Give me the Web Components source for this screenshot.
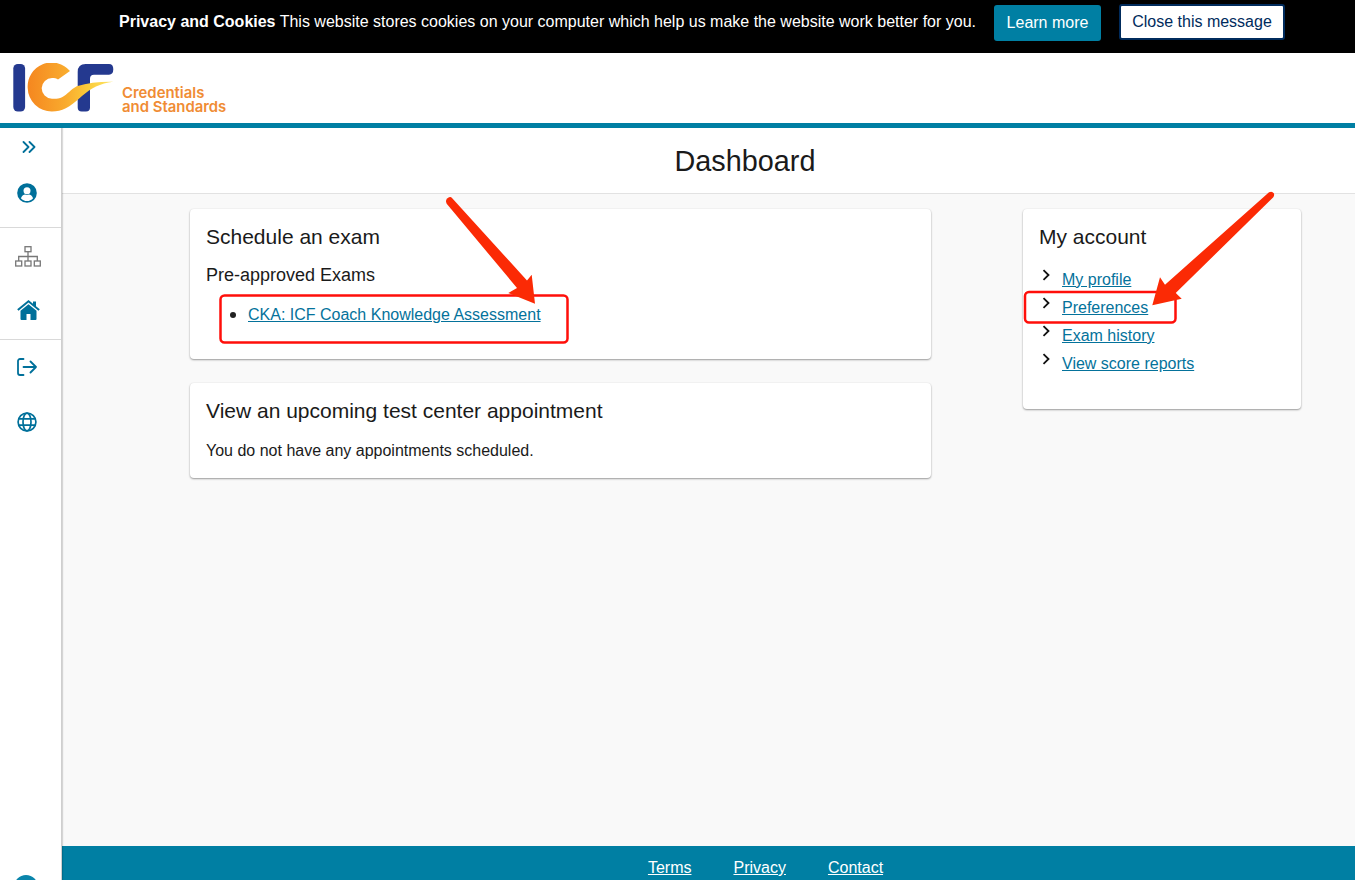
<!DOCTYPE html>
<html lang="en"><head><meta charset="utf-8"><title>Dashboard</title>
<style>
html,body{margin:0;height:880px;overflow:hidden;font-family:"Liberation Sans",Arial,sans-serif;color:#1a1a1a;background:#fff}
</style></head><body>
<app-shell>
  <cookie-banner slot="banner"></cookie-banner>
  <site-header slot="header"></site-header>
  <side-nav slot="nav"></side-nav>
  <page-title slot="title">Dashboard</page-title>
  <dash-grid slot="content">
    <dash-card slot="left" heading="Schedule an exam" pb="30">
      <exam-list></exam-list>
    </dash-card>
    <dash-card slot="left" heading="View an upcoming test center appointment" pb="15">
      <plain-note>You do not have any appointments scheduled.</plain-note>
    </dash-card>
    <dash-card slot="right" heading="My account" pb="31">
      <account-list></account-list>
    </dash-card>
  </dash-grid>
  <site-footer slot="footer"></site-footer>
  <note-overlay slot="overlay"></note-overlay>
</app-shell>
<script>
function def(name,html,init){
  customElements.define(name,class extends HTMLElement{
    constructor(){super();this.attachShadow({mode:'open'}).innerHTML=html;}
    connectedCallback(){if(init)init(this);}
  });
}
def('app-shell',`<style>
:host{display:flex;flex-direction:column;height:880px;position:relative;overflow:hidden}
.body{flex:1;display:flex;min-height:0}
.col{flex:1;display:flex;flex-direction:column;min-width:0}
.content{flex:1;min-height:0;background:#f9f9f9}
</style>
<slot name="banner"></slot><slot name="header"></slot>
<div class="body"><slot name="nav"></slot>
<div class="col"><slot name="title"></slot><div class="content"><slot name="content"></slot></div><slot name="footer"></slot></div></div>
<slot name="overlay"></slot>`);

def('cookie-banner',`<style>
:host{display:flex;align-items:flex-start;height:53px;background:#000;color:#fff;box-sizing:border-box;padding-left:119px;font-size:16px}
p{margin:12px 0 0;line-height:20px;white-space:nowrap;width:875px;flex:none}
b{font-weight:700}
a,button{font:inherit;box-sizing:border-box;display:flex;align-items:center;justify-content:center;text-decoration:none}
.learn{width:107px;height:36px;margin-top:5px;background:#007fa3;color:#fff;border-radius:3px}
.close{width:166px;height:36px;margin:4px 0 0 18px;background:#fff;color:#002b5c;border:2px solid #002b5c;border-radius:3px}
</style><p><b>Privacy and Cookies</b> This website stores cookies on your computer which help us make the website work better for you.</p>
<a class="learn" href="#">Learn more</a><button class="close">Close this message</button>`);

def('site-header',`<style>
:host{display:flex;height:75px;box-sizing:border-box;background:#fff;border-bottom:5px solid #007fa3;padding:10px 0 0 12px}
svg{display:block;flex:none}
.t{font-family:Inter,"Liberation Sans",sans-serif;font-weight:600;font-size:14.900px;line-height:14px;color:#f08c34;margin:23px 0 0 -1px;white-space:nowrap}
</style>
<svg width="111" height="52" viewBox="0 0 111 52" role="img" aria-label="ICF logo">
<defs><linearGradient id="o" gradientUnits="userSpaceOnUse" x1="15" y1="0" x2="102" y2="0"><stop offset="0" stop-color="#f5861f"/><stop offset=".45" stop-color="#f9ab2e"/><stop offset=".7" stop-color="#fbcb3a"/><stop offset="1" stop-color="#fde668"/></linearGradient></defs>
<rect x="1.300" y="1" width="11.800" height="47.500" rx="4.500" fill="#24398f"/>
<path d="M69.700 48.500q-4 0-4-4V9q0-8 8-8H97q4.300 0 4.300 5.300t-4.300 5.400H82q-4 0-4 4V44.500q0 4-4 4z" fill="#24398f"/>
<path d="M58 8A24 24 0 0 0 15.700 25 24 24 0 0 0 40 48.500C50 48.500 57 45 69.700 33.300 79 25 88 20.500 101.300 18.700 88 18.500 76 19.500 64.700 23.300 58 27 56 31 50 34.300 47 35.700 43 36 40 35.700A10.500 10.500 0 0 1 29.700 25 10.500 10.500 0 0 1 40 15c2.400 0 4.500.4 6 1.500z" fill="url(#o)"/>
</svg>
<div class="t">Credentials<br>and Standards</div>`);

const teal='#00709a';
def('side-nav',`<style>
:host{display:block;width:62px;flex:none;box-sizing:border-box;background:#fff;border-right:1px solid #cfcfcf;box-shadow:1px 0 1px rgba(0,0,0,.14);position:relative;z-index:1}
.g{width:61px;display:flex;flex-direction:column;align-items:center;box-sizing:border-box;padding-right:8px}
.a,.b{border-bottom:1px solid #d9d9d9}
.i{display:flex;align-items:center;justify-content:center}
svg{display:block}
.a{height:100px;justify-content:flex-start}
.b{height:112px;padding-top:1px}
.c{margin-top:-1px}
.foot{position:absolute;left:14px;top:747px;width:24px;height:24px;border-radius:50%;background:#0a85ab}
</style>
<div class="g a">
 <div class="i" style="height:38px;margin-left:4px">
 <svg width="14" height="12" viewBox="0 0 14 12" fill="none" stroke="${teal}" stroke-width="1.800" stroke-linecap="round" stroke-linejoin="round"><path d="M1.500 1l5 5-5 5M7.500 1l5 5-5 5"/></svg></div>
 <div class="i" style="height:54px">
 <svg width="20" height="20" viewBox="0 0 20 20"><circle cx="10" cy="10" r="9.800" fill="${teal}"/><circle cx="10" cy="7.700" r="3.500" fill="#fff"/><path d="M3.900 15.200c1-2.600 3-3.600 4.100-3.600 1.300.5 2.700.5 4 0 1.100 0 3.100 1 4.100 3.600-1.500 1.800-3.700 2.900-6.100 2.900s-4.600-1.100-6.100-2.900z" fill="#fff"/></svg></div>
</div>
<div class="g b">
 <div class="i" style="height:54px;margin-left:3px">
 <svg width="26" height="21" viewBox="0 0 26 21" fill="none" stroke="#777" stroke-width="1.300"><rect x="10" y=".7" width="6" height="5"/><rect x=".7" y="15" width="6" height="5"/><rect x="10" y="15" width="6" height="5"/><rect x="19.300" y="15" width="6" height="5"/><path d="M13 5.700V15M3.700 15v-4.500h18.600V15"/></svg></div>
 <div class="i" style="height:54px;margin-left:3px">
 <svg width="23" height="20" viewBox="0 0 23 20" fill="${teal}"><path d="M11.500 4.200 3.500 10.800V19a1 1 0 0 0 1 1h5v-6h4v6h5a1 1 0 0 0 1-1v-8.200z"/><path d="M11.500 0 .2 9.300l1.300 1.500 10-8.200 10 8.200 1.300-1.500-3.800-3.100V1.500h-3v2.200z"/></svg></div>
</div>
<div class="g c">
 <div class="i" style="height:55px">
 <svg width="20" height="18" viewBox="0 0 20 18" fill="none" stroke="${teal}" stroke-width="1.800" stroke-linecap="round" stroke-linejoin="round"><path d="M6.500 1H3a2 2 0 0 0-2 2v12a2 2 0 0 0 2 2h3.500M6.500 9H19M13.500 3.500 19 9l-5.500 5.500"/></svg></div>
 <div class="i" style="height:55px">
 <svg width="20" height="20" viewBox="0 0 20 20" fill="none" stroke="${teal}" stroke-width="1.700"><circle cx="10" cy="10" r="8.900"/><ellipse cx="10" cy="10" rx="4" ry="8.900"/><path d="M1.800 6.800h16.400M1.800 13.200h16.400"/></svg></div>
</div>
<div class="foot"></div>`);

def('page-title',`<style>
:host{display:block;height:66px;box-sizing:border-box;background:#fff;border-bottom:1px solid #e2e2e2;padding:15px 0 0 73px;text-align:center;font-size:28.800px;line-height:36px;color:#1a1a1a}
</style><slot></slot>`);

def('dash-grid',`<style>
:host{display:grid;grid-template-columns:741px 278px;column-gap:92px;padding:15px 0 0 128px;align-items:start}
.l{display:flex;flex-direction:column;gap:24px}
</style><div class="l"><slot name="left"></slot></div><div><slot name="right"></slot></div>`);

def('dash-card',`<style>
:host{display:block;background:#fff;border-radius:4px;box-shadow:0 1px 2px rgba(0,0,0,.38),0 0 2px rgba(0,0,0,.06);padding:14px 16px 16px;box-sizing:border-box}
h2{margin:0;font-weight:400;font-size:21px;line-height:28px;color:#1a1a1a}
</style><h2></h2><slot></slot>`,el=>{
  el.shadowRoot.querySelector('h2').textContent=el.getAttribute('heading');
  el.style.paddingBottom=el.getAttribute('pb')+'px';
});

def('exam-list',`<style>
:host{display:block}
h3{margin:11px 0 0;font-weight:400;font-size:18px;line-height:26px}
ul{margin:13px 0 0;padding:0 0 0 42px;font-size:16px;line-height:28px;list-style:none}
li{position:relative}
li::before{content:"";position:absolute;left:-18px;top:11px;width:6px;height:6px;border-radius:50%;background:#222}
a{color:#04729b}
</style><h3>Pre-approved Exams</h3><ul><li><a href="#">CKA: ICF Coach Knowledge Assessment</a></li></ul>`);

def('plain-note',`<style>:host{display:block;margin-top:14px;font-size:16px;line-height:24px}</style><slot></slot>`);

def('account-list',`<style>
:host{display:block;margin-top:15px}
.r{display:flex;height:28px;align-items:center;font-size:16px}
svg{flex:none;margin:-10px 11px 0 3px}
a{color:#04729b}
</style>
${['My profile','Preferences','Exam history','View score reports'].map(t=>`<div class="r"><svg width="9" height="12" viewBox="0 0 9 12" fill="none" stroke="#111" stroke-width="1.800"><path d="M1.500 1.200 6.500 6l-5 4.800"/></svg><a href="#">${t}</a></div>`).join('')}`);

def('site-footer',`<style>
:host{display:flex;justify-content:center;gap:42px;height:34px;box-sizing:border-box;background:#007fa3;padding:13px 0 0 114px;font-size:16px;line-height:18px}
a{color:#fff}
</style><a href="#">Terms</a><a href="#">Privacy</a><a href="#">Contact</a>`);

def('note-overlay',`<style>
:host{position:absolute;inset:0;pointer-events:none;display:block}
svg{position:absolute;left:0;top:0}
</style>
<svg width="1355" height="880" viewBox="0 0 1355 880">
<g fill="none" stroke="#ff0f0a" stroke-width="2.500"><rect x="220.500" y="295.500" width="347" height="47" rx="4"/><rect x="1025" y="292" width="150.500" height="30.500" rx="4"/></g>
<path d="M446.700 203.700Q444.500 199 449 197.300 451 196.700 452 198L527 280.500 531.700 274.700 535 303.700 508.300 293 517 288z" fill="#fb2a05"/>
<path d="M1269 192.300Q1272 190.500 1274 193.500 1274.500 195.500 1273.300 197.300L1175.700 293 1181.700 298.700 1152.300 305.300 1160 277.300 1165 284.700z" fill="#fb2a05"/>
</svg>`);
</script>
</body></html>
